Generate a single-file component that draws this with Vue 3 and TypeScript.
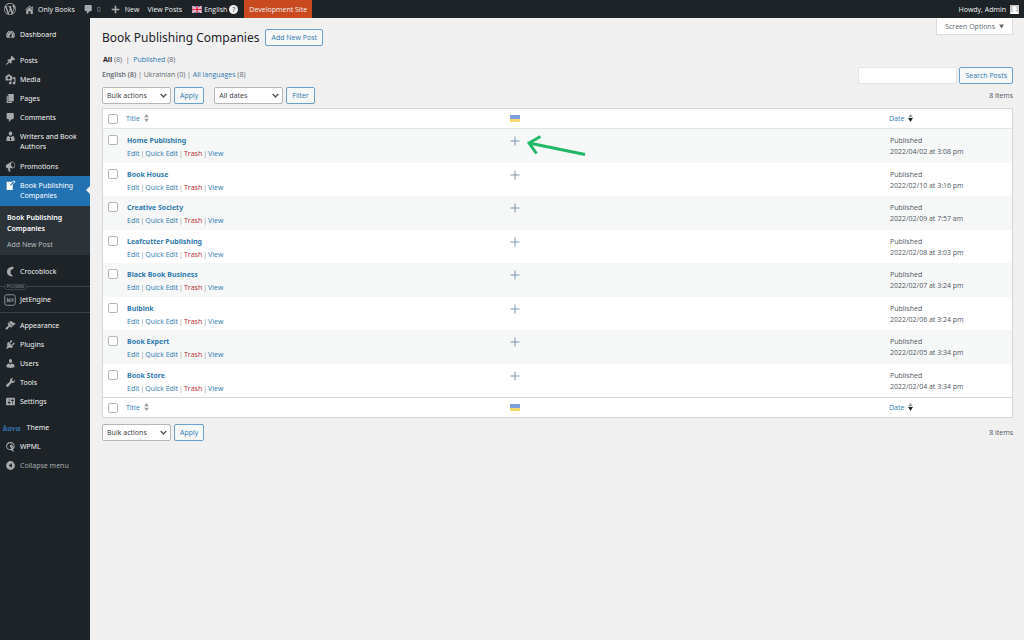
<script setup lang="ts">
import { ref } from 'vue'

interface MenuEntry {
  label: string
  icon: string
  wide?: boolean
}
interface Post {
  title: string
  date: string
}

const icons: Record<string, string> = {
  dashboard:
    'M3.76 16h12.48A7.998 7.998 0 0 0 10 3a7.998 7.998 0 0 0-6.24 13zM10 4c.55 0 1 .45 1 1s-.45 1-1 1-1-.45-1-1 .45-1 1-1zM6 6c.55 0 1 .45 1 1s-.45 1-1 1-1-.45-1-1 .45-1 1-1zm8 0c.55 0 1 .45 1 1s-.45 1-1 1-1-.45-1-1 .45-1 1-1zm-5.37 5.55L12 7v6c0 1.1-.9 2-2 2s-2-.9-2-2c0-.57.24-1.08.63-1.45zM4 10c.55 0 1 .45 1 1s-.45 1-1 1-1-.45-1-1 .45-1 1-1zm12 0c.55 0 1 .45 1 1s-.45 1-1 1-1-.45-1-1 .45-1 1-1z',
  post: 'M10.44 3.02l1.82-1.82 6.36 6.35-1.83 1.82c-1.05-.68-2.48-.57-3.41.36l-.75.75c-.92.93-1.04 2.35-.35 3.41l-1.83 1.82-2.41-2.41-2.8 2.79c-.42.42-3.38 2.71-3.8 2.29s1.86-3.39 2.28-3.81l2.79-2.79L4.1 9.36l1.83-1.82c1.05.69 2.48.57 3.4-.36l.75-.75c.93-.92 1.05-2.35.36-3.41z',
  media:
    'M13 11V4c0-.55-.45-1-1-1h-1.67L9 1H5L3.67 3H2c-.55 0-1 .45-1 1v7c0 .55.45 1 1 1h10c.55 0 1-.45 1-1zM7 4.5c1.38 0 2.5 1.12 2.5 2.5S8.38 9.5 7 9.5 4.5 8.38 4.5 7 5.62 4.5 7 4.5zM14 6h5v10.5c0 1.38-1.12 2.5-2.5 2.5S14 17.88 14 16.5s1.12-2.5 2.5-2.5c.17 0 .34.02.5.05V9h-3V6zm-4 8.05V13h2v3.5c0 1.38-1.12 2.5-2.5 2.5S7 17.88 7 16.5 8.12 14 9.5 14c.17 0 .34.02.5.05z',
  page: 'M6 15V2h10v13H6zm-1 1h8v2H3V5h2v11z',
  comment:
    'M5 2h9c1.1 0 2 .9 2 2v7c0 1.1-.9 2-2 2h-2l-5 5v-5H5c-1.1 0-2-.9-2-2V4c0-1.1.9-2 2-2z',
  author:
    'M10 1c2 0 3.2 1.5 3.2 3.4S12 8.2 10 8.2 6.800 6.300 6.800 4.400 8 1 10 1zM6.500 9.200L10 12l3.500-2.800c2.500.5 3.800 2 3.800 4.300V18H2.700v-4.500c0-2.300 1.300-3.800 3.800-4.300zM9.300 12.500L8.500 16l1.500 1.300 1.500-1.300-.8-3.500z',
  megaphone:
    'M18.15 5.94c.46 1.62.38 3.22-.02 4.48-.42 1.28-1.26 2.18-2.3 2.48-.16.06-.26.06-.4.06-.06.02-.12.02-.18.02-.06.02-.14.02-.22.02h-6.8l2.22 5.5c.02.14-.06.26-.14.34-.08.1-.24.16-.34.16H6.95c-.1 0-.26-.06-.34-.16-.08-.08-.16-.2-.14-.34l-1-5.5H4.25l-.02-.02c-.5.06-1.08-.18-1.54-.62s-.88-1.08-1.06-1.88c-.24-.8-.2-1.56-.02-2.2.18-.62.58-1.08 1.06-1.3l.02-.02 9-5.4c.1-.06.18-.1.24-.16.06-.04.14-.08.24-.12.16-.08.28-.12.5-.18 1.04-.3 2.24.1 3.22.98s1.84 2.24 2.26 3.86zm-2.58 5.98h-.02c.4-.1.74-.34 1.04-.7.58-.7.86-1.76.86-3.04 0-.64-.1-1.3-.28-1.98-.34-1.36-1.02-2.5-1.78-3.24s-1.68-1.1-2.46-.88c-.82.22-1.4.96-1.7 2-.32 1.04-.28 2.36.06 3.72.38 1.36 1 2.5 1.8 3.24.78.74 1.62 1.1 2.48.88z',
  write:
    'M16.89 1.2l1.41 1.41c.39.39.39 1.02 0 1.41L14 8.33V18H3V3h10.67l1.8-1.8c.4-.39 1.03-.4 1.42 0zm-5.66 8.48l5.37-5.36-1.42-1.42-5.36 5.37-.71 2.12z',
  croco:
    'M14.500 1.500C8 1.500 3.500 5.500 3.500 10.500S8 19 13 19c1 0 1.500-1.500.5-2.200-2.300-1.300-3.500-3.500-3.500-6s1.300-4.800 4.500-5.300c1.500-.5 1.500-4 0-4z',
  appearance:
    'M14.48 11.06L7.41 3.99l1.5-1.5c.5-.56 2.3-.47 3.51.32 1.21.8 1.43 1.28 2.91 2.1 1.18.64 2.45 1.26 4.45.85zm-.71.71L6.7 4.7 4.93 6.47c-.39.39-.39 1.02 0 1.41l1.06 1.06c.39.39.39 1.03 0 1.42-.6.6-1.43 1.11-2.21 1.69-.35.26-.7.53-1.01.84C1.43 14.23.4 16.08 1.4 17.07c.99 1 2.84-.03 4.18-1.36.31-.31.58-.66.85-1.02.57-.78 1.08-1.61 1.69-2.21.39-.39 1.02-.39 1.41 0l1.06 1.06c.39.39 1.02.39 1.41 0z',
  plugins:
    'M13.11 4.36L9.87 7.6 8 5.73l3.24-3.24c.35-.34 1.05-.2 1.56.32.52.51.66 1.21.31 1.55zm-8 1.77l.91-1.12 9.01 9.01-1.19.84c-.71.71-2.63 1.16-3.82 1.16H6.14L4.9 17.26c-.59.59-1.54.59-2.12 0-.59-.58-.59-1.53 0-2.12l1.24-1.24v-3.88c0-1.13.4-3.19 1.09-3.89zm7.26 3.97l3.24-3.24c.34-.35 1.04-.21 1.55.31.52.51.66 1.21.31 1.55l-3.24 3.25z',
  users:
    'M10 9.25c-2.27 0-2.73-3.44-2.73-3.44C7 4.02 7.82 2 9.97 2c2.16 0 2.98 2.02 2.71 3.81 0 0-.41 3.44-2.68 3.44zm0 2.57L12.72 10c2.39 0 4.52 2.33 4.52 4.53v2.49s-3.65 1.13-7.24 1.13c-3.65 0-7.24-1.13-7.24-1.13v-2.49c0-2.25 1.94-4.48 4.47-4.48z',
  tools:
    'M16.68 9.77c-1.34 1.34-3.3 1.67-4.95.99l-5.41 6.52c-.99.99-2.59.99-3.58 0s-.99-2.59 0-3.57l6.52-5.42c-.68-1.65-.35-3.61.99-4.95 1.28-1.28 3.12-1.62 4.72-1.06l-2.89 2.89 2.82 2.82 2.86-2.87c.53 1.58.18 3.39-1.08 4.65z',
  settings:
    'M18 16V4c0-.55-.45-1-1-1H3c-.55 0-1 .45-1 1v12c0 .55.45 1 1 1h14c.55 0 1-.45 1-1zM8 11h1c.55 0 1 .45 1 1s-.45 1-1 1H8v1.5c0 .28-.22.5-.5.5s-.5-.22-.5-.5V13H6c-.55 0-1-.45-1-1s.45-1 1-1h1V5.5c0-.28.22-.5.5-.5s.5.22.5.5V11zm5-2h-1c-.55 0-1-.45-1-1s.45-1 1-1h1V5.5c0-.28.22-.5.5-.5s.5.22.5.5V7h1c.55 0 1 .45 1 1s-.45 1-1 1h-1v5.5c0 .28-.22.5-.5.5s-.5-.22-.5-.5V9z',
  wpml: 'M9.500 2C14 2 17.500 5.300 17.500 9.700c0 3-1.500 5-3.500 6.300l2.500 2.500-1.300 1.200-5-3.200c-4.500 0-8.200-2.800-8.200-7C2 5.300 5 2 9.500 2zM9.500 4C6 4 3.800 6.500 3.800 9.500S6 14.700 9 14.700c2 0 2.700-.9 2.300-1.900-.5-1-2.300-1.500-2.300-3.300 0-1.600 1.200-2.500 2.700-2.500s2.300 1 2.300 2.300c0 1-.4 1.800-.4 2.700 1.200-.6 2.100-1.400 2.100-3C15.700 6 13 4 9.500 4z',
  collapse:
    'M10 2a8 8 0 1 0 0 16a8 8 0 1 0 0-16zM12.500 6v8L6.500 10z',
  home: 'M16 8.500l1.530 1.530-1.060 1.060L10 4.600l-6.470 6.490-1.060-1.060L10 2.500l4 4v-2h2v4zm-6-2.460l6 5.990V18h-4v-5H8v5H4v-5.970z',
  plus: 'M17 8.500v3h-5.500V17h-3v-5.500H3v-3h5.500V3h3v5.500z',
  wordpress:
    'M20 10c0-5.51-4.49-10-10-10C4.48 0 0 4.49 0 10c0 5.52 4.48 10 10 10 5.51 0 10-4.48 10-10zM7.78 15.37L4.37 6.22c.55-.02 1.17-.08 1.17-.08.5-.06.44-1.13-.06-1.11 0 0-1.45.11-2.37.11-.18 0-.37 0-.58-.01C4.12 2.69 6.87 1.11 10 1.11c2.33 0 4.45.87 6.05 2.34-.68-.11-1.65.39-1.65 1.58 0 .74.45 1.36.9 2.1.35.61.55 1.36.55 2.46 0 1.49-1.4 5-1.4 5l-3.03-8.37c.54-.02.82-.17.82-.17.5-.05.44-1.25-.06-1.22 0 0-1.44.12-2.38.12-.87 0-2.33-.12-2.33-.12-.5-.03-.56 1.2-.06 1.22l.92.08 1.26 3.41zM17.41 10c.24-.64.74-1.87.43-4.25.7 1.29 1.05 2.71 1.05 4.25 0 3.29-1.73 6.24-4.4 7.78.97-2.59 1.94-5.2 2.92-7.78zM6.1 18.09C3.12 16.65 1.11 13.53 1.11 10c0-1.3.23-2.48.72-3.59C3.25 10.3 4.67 14.2 6.1 18.09zm4.03-6.63l2.58 6.98c-.86.29-1.76.45-2.71.45-.79 0-1.57-.11-2.29-.33.81-2.38 1.62-4.74 2.42-7.1z',
}

const content: MenuEntry[] = [
  { label: 'Posts', icon: 'post' },
  { label: 'Media', icon: 'media' },
  { label: 'Pages', icon: 'page' },
  { label: 'Comments', icon: 'comment' },
  { label: 'Writers and Book Authors', icon: 'author', wide: true },
  { label: 'Promotions', icon: 'megaphone' },
]
const system: MenuEntry[] = [
  { label: 'Appearance', icon: 'appearance' },
  { label: 'Plugins', icon: 'plugins' },
  { label: 'Users', icon: 'users' },
  { label: 'Tools', icon: 'tools' },
  { label: 'Settings', icon: 'settings' },
]
const posts: Post[] = [
  { title: 'Home Publishing', date: '2022/04/02 at 3:08 pm' },
  { title: 'Book House', date: '2022/02/10 at 3:16 pm' },
  { title: 'Creative Society', date: '2022/02/09 at 7:57 am' },
  { title: 'Leafcutter Publishing', date: '2022/02/08 at 3:03 pm' },
  { title: 'Black Book Business', date: '2022/02/07 at 3:24 pm' },
  { title: 'Bulbink', date: '2022/02/06 at 3:24 pm' },
  { title: 'Book Expert', date: '2022/02/05 at 3:34 pm' },
  { title: 'Book Store', date: '2022/02/04 at 3:34 pm' },
]

const selected = ref<string[]>([])
const search = ref('')

function toggleAll(event: Event) {
  const on = (event.target as HTMLInputElement).checked
  selected.value = on ? posts.map((p) => p.title) : []
}
</script>

<template>
  <div class="admin">
    <header class="bar">
      <a href="#" class="bar-item logo" aria-label="About WordPress">
        <svg class="ico big" viewBox="0 0 20 20"><path :d="icons.wordpress" /></svg>
      </a>
      <a href="#" class="bar-item site"><svg class="ico" viewBox="0 0 20 20"><path :d="icons.home" /></svg>Only Books</a>
      <a href="#" class="bar-item comments"><svg class="ico" viewBox="0 0 20 20"><path :d="icons.comment" /></svg><span class="dim">0</span></a>
      <a href="#" class="bar-item new"><svg class="ico" viewBox="0 0 20 20"><path :d="icons.plus" /></svg>New</a>
      <a href="#" class="bar-item view">View Posts</a>
      <a href="#" class="bar-item lang">
        <svg class="flag-uk" viewBox="0 0 20 14">
          <rect width="20" height="14" fill="#4a58a6" />
          <path d="M0 0L20 14M20 0L0 14" stroke="#fff" stroke-width="3" />
          <path d="M0 0L20 14M20 0L0 14" stroke="#d8374a" stroke-width="1" />
          <path d="M10 0V14M0 7H20" stroke="#fff" stroke-width="5" />
          <path d="M10 0V14M0 7H20" stroke="#d8283e" stroke-width="3" />
        </svg>English<span class="help">?</span>
      </a>
      <a href="#" class="bar-item dev">Development Site</a>
      <a href="#" class="bar-item me">Howdy, Admin
        <svg class="avatar" viewBox="0 0 20 20">
          <rect width="20" height="20" fill="#c8c8c8" />
          <path d="M10 2.500c3 0 4.500 2 4.500 4.700 0 2.300-1 4.300-2.300 5.100v1.400l6.300 2.800V20h-17v-3.500l6.300-2.800v-1.400C6.500 11.500 5.500 9.500 5.500 7.200 5.500 4.500 7 2.500 10 2.500z" fill="#fff" />
        </svg>
      </a>
    </header>

    <div class="body">
      <nav class="side">
        <div class="group">
          <a href="#" class="item"><svg class="ico" viewBox="0 0 20 20"><path :d="icons.dashboard" fill-rule="evenodd" /></svg><span>Dashboard</span></a>
        </div>
        <div class="group">
          <a v-for="m in content" :key="m.label" href="#" class="item" :class="{ wide: m.wide }">
            <svg class="ico" viewBox="0 0 20 20"><path :d="icons[m.icon]" fill-rule="evenodd" /></svg><span>{{ m.label }}</span>
          </a>
          <a href="#" class="item wide current"><svg class="ico" viewBox="0 0 20 20"><path :d="icons.write" fill-rule="evenodd" /></svg><span>Book Publishing Companies</span></a>
          <div class="sub">
            <a href="#" class="on">Book Publishing Companies</a>
            <a href="#">Add New Post</a>
          </div>
        </div>
        <div class="group before-rule">
          <a href="#" class="item"><svg class="ico" viewBox="0 0 20 20"><path :d="icons.croco" /></svg><span>Crocoblock</span></a>
        </div>
        <div class="group ruled jet-group">
          <span class="tag">PLUGINS</span>
          <a href="#" class="item jet">
            <svg class="jet-ico" viewBox="0 0 24 24"><rect x="1.500" y="1.500" width="21" height="21" rx="4" fill="none" stroke="#8b9096" stroke-width="2" /><path d="M7 8v6c0 2-2.500 2-2.500 1M13.500 10h-4v5h4M9.500 12.500H13M16 8v7M19.500 10L16.500 12.500L19.500 15" fill="none" stroke="#a7aaad" stroke-width="1.500" /></svg>
            <span>JetEngine</span>
          </a>
        </div>
        <div class="group ruled">
          <a v-for="m in system" :key="m.label" href="#" class="item">
            <svg class="ico" viewBox="0 0 20 20"><path :d="icons[m.icon]" fill-rule="evenodd" /></svg><span>{{ m.label }}</span>
          </a>
        </div>
        <div class="group">
          <a href="#" class="item theme"><span class="kava">kava</span><span>Theme</span></a>
          <a href="#" class="item"><svg class="ico" viewBox="0 0 20 20"><path :d="icons.wpml" fill-rule="evenodd" /></svg><span>WPML</span></a>
          <button type="button" class="item collapse"><svg class="ico" viewBox="0 0 20 20"><path :d="icons.collapse" fill-rule="evenodd" /></svg><span>Collapse menu</span></button>
        </div>
      </nav>

      <main class="main">
        <div class="top">
          <div class="heading">
            <h1>Book Publishing Companies</h1>
            <a href="#" class="btn">Add New Post</a>
          </div>
          <button type="button" class="screen">Screen Options <svg class="tri" viewBox="0 0 10 10"><path d="M0 1H10L5 9z" /></svg></button>
        </div>

        <div class="filters">
          <div>
            <p class="views first"><a href="#" class="now">All</a> (8) &nbsp;|&nbsp; <a href="#">Published</a> (8)</p>
            <p class="views"><strong>English (8)</strong> | Ukrainian (0) | <a href="#">All languages</a> (8)</p>
          </div>
          <form class="search" @submit.prevent>
            <input v-model="search" type="search" aria-label="Search Posts" />
            <button type="submit" class="btn">Search Posts</button>
          </form>
        </div>

        <div class="tools">
          <span class="select"><select aria-label="Bulk actions"><option>Bulk actions</option></select><svg viewBox="0 0 10 10"><path d="M1 3L5 7L9 3" /></svg></span>
          <button type="button" class="btn">Apply</button>
          <span class="select dates"><select aria-label="Filter by date"><option>All dates</option></select><svg viewBox="0 0 10 10"><path d="M1 3L5 7L9 3" /></svg></span>
          <button type="button" class="btn">Filter</button>
          <span class="count">8 items</span>
        </div>

        <div class="sheet">
          <table>
            <thead>
              <tr>
                <td class="c-check"><input type="checkbox" aria-label="Select all" @change="toggleAll" /></td>
                <th class="c-title"><a href="#">Title<svg class="sort" viewBox="0 0 6 10"><path d="M0 4L3 0L6 4zM0 6L3 10L6 6z" /></svg></a></th>
                <th class="c-lang"><svg class="flag" viewBox="0 0 10 7" role="img" aria-label="Ukrainian"><rect width="10" height="4" fill="#7d9edb" /><rect y="4" width="10" height="3" fill="#f5d96a" /></svg></th>
                <th class="c-date"><a href="#">Date<svg class="sort" viewBox="0 0 6 10"><path d="M0 4L3 0L6 4z" /><path class="dark" d="M0 5L3 10L6 5z" /></svg></a></th>
              </tr>
            </thead>
            <tbody>
              <tr v-for="(p, i) in posts" :key="p.title">
                <td class="c-check"><input v-model="selected" type="checkbox" :value="p.title" :aria-label="'Select ' + p.title" /></td>
                <td class="c-title">
                  <a href="#" class="name">{{ p.title }}</a>
                  <div class="acts"><a href="#">Edit</a><span>|</span><a href="#">Quick Edit</a><span>|</span><a href="#" class="trash">Trash</a><span>|</span><a href="#">View</a></div>
                </td>
                <td class="c-lang">
                  <a href="#" class="add" :aria-label="'Add translation of ' + p.title"><svg viewBox="0 0 10 10"><path d="M5 0.500V9.500M0.500 5H9.500" /></svg></a>
                  <svg v-if="i === 0" class="arrow" viewBox="0 0 60 22"><path d="M2 8L58 19.500M13.500 1.500L2 8L9.500 18.500" /></svg>
                </td>
                <td class="c-date">Published<br />{{ p.date }}</td>
              </tr>
            </tbody>
            <tfoot>
              <tr>
                <td class="c-check"><input type="checkbox" aria-label="Select all" @change="toggleAll" /></td>
                <th class="c-title"><a href="#">Title<svg class="sort" viewBox="0 0 6 10"><path d="M0 4L3 0L6 4zM0 6L3 10L6 6z" /></svg></a></th>
                <th class="c-lang"><svg class="flag" viewBox="0 0 10 7" role="img" aria-label="Ukrainian"><rect width="10" height="4" fill="#7d9edb" /><rect y="4" width="10" height="3" fill="#f5d96a" /></svg></th>
                <th class="c-date"><a href="#">Date<svg class="sort" viewBox="0 0 6 10"><path d="M0 4L3 0L6 4z" /><path class="dark" d="M0 5L3 10L6 5z" /></svg></a></th>
              </tr>
            </tfoot>
          </table>
        </div>

        <div class="tools bottom">
          <span class="select"><select aria-label="Bulk actions"><option>Bulk actions</option></select><svg viewBox="0 0 10 10"><path d="M1 3L5 7L9 3" /></svg></span>
          <button type="button" class="btn">Apply</button>
          <span class="count">8 items</span>
        </div>
      </main>
    </div>
  </div>
</template>

<style>
body {
  margin: 0;
  background: #f0f0f1;
}
</style>

<style scoped>
.admin {
  min-height: 100vh;
  display: flex;
  flex-direction: column;
  font-family: "Open Sans", "Noto Sans", sans-serif;
  font-size: 7px;
  line-height: 11px;
  color: #50575e;
}
* {
  box-sizing: border-box;
}
a {
  color: #2f7aad;
  text-decoration: none;
}
button,
input,
select {
  font: inherit;
  margin: 0;
}
.ico {
  width: 11px;
  height: 11px;
  flex: none;
  fill: #a7aaad;
}
.bar {
  height: 18px;
  flex: none;
  display: flex;
  align-items: stretch;
  background: #1d2327;
}
.bar-item {
  display: flex;
  align-items: center;
  color: #f0f0f1;
  white-space: nowrap;
}
.big {
  width: 12px;
  height: 12px;
}
.logo {
  padding: 0 4px;
}
.site {
  gap: 3px;
  padding: 0 4px;
}
.comments {
  gap: 3px;
  padding: 0 5px 0 4px;
}
.new {
  gap: 4px;
  padding: 0 4px;
}
.view {
  padding: 0 4px;
}
.lang {
  gap: 2px;
  padding: 0 6px;
}
.dim {
  color: #8b9096;
}
.flag-uk {
  width: 10px;
  height: 7px;
}
.help {
  width: 9px;
  height: 9px;
  border-radius: 50%;
  background: #f0f0f1;
  color: #787c82;
  font-weight: 700;
  line-height: 9px;
  text-align: center;
}
.dev {
  padding: 0 5px;
  background: #ca4a1f;
}
.me {
  margin-left: auto;
  gap: 4px;
  padding-right: 5px;
}
.avatar {
  width: 9px;
  height: 9px;
}
.body {
  flex: 1;
  display: flex;
}
.side {
  width: 90px;
  flex: none;
  padding-top: 7px;
  background: #1d2327;
  font-family: "Noto Sans", "Open Sans", sans-serif;
}
.group {
  position: relative;
  margin-bottom: 7px;
}
.item {
  position: relative;
  display: flex;
  align-items: center;
  gap: 4px;
  width: 100%;
  height: 19px;
  padding: 0 5px;
  border: 0;
  background: none;
  color: #f0f0f1;
  text-align: left;
}
.wide {
  height: 30px;
  line-height: 10px;
}
.wide .ico {
  align-self: flex-start;
  margin-top: 4px;
}
.current {
  background: #2271b1;
  color: #fff;
}
.current .ico {
  fill: #fff;
}
.current::after {
  content: "";
  position: absolute;
  right: 0;
  top: 10px;
  border: 4px solid transparent;
  border-right-color: #f0f0f1;
  border-left: 0;
}
.sub {
  display: flex;
  flex-direction: column;
  gap: 5px;
  padding: 6px 7px 5px;
  background: #2c3338;
}
.sub a {
  color: #b4b9be;
}
.sub .on {
  color: #fff;
  font-weight: 600;
}
.before-rule {
  margin-bottom: 5px;
}
.ruled {
  border-top: 1px solid #3c434a;
  padding-top: 3px;
}
.jet-group {
  margin-bottom: 3px;
}
.tag {
  position: absolute;
  left: 4px;
  top: -3px;
  padding: 0 2px;
  border: 1px solid #3c434a;
  border-radius: 3px;
  background: #1d2327;
  color: #8b9096;
  font-size: 4px;
  line-height: 4px;
}
.jet {
  padding-left: 4px;
}
.jet-ico {
  width: 12px;
  height: 12px;
}
.theme {
  gap: 6px;
  padding-left: 3px;
}
.kava {
  color: #3573b5;
  font: italic 700 9px "Liberation Serif", serif;
}
.collapse {
  color: #a7aaad;
}
.main {
  flex: 1;
  min-width: 0;
  padding: 0 11px 0 12px;
}
.top,
.filters {
  display: flex;
  justify-content: space-between;
  align-items: flex-start;
}
.heading {
  display: flex;
  align-items: center;
  gap: 6px;
  padding-top: 11px;
}
h1 {
  margin: 0;
  font-family: "Noto Sans", "Open Sans", sans-serif;
  font-size: 12px;
  line-height: 17px;
  font-weight: 400;
  color: #1d2327;
}
.btn {
  height: 17px;
  padding: 0 5px;
  border: 1px solid #6ba0c9;
  border-radius: 2px;
  background: #f6f7f7;
  color: #2f7aad;
  line-height: 15px;
  white-space: nowrap;
}
.screen {
  display: flex;
  align-items: center;
  gap: 4px;
  height: 17px;
  padding: 0 8px;
  border: 1px solid #dcdcde;
  border-top: 0;
  background: #fff;
  color: #646970;
}
.tri {
  width: 5px;
  height: 5px;
  fill: #646970;
}
.filters {
  padding-top: 8px;
}
.views {
  margin: 0 0 3px;
  line-height: 12px;
  color: #646970;
}
.first {
  padding-left: 1px;
}
.views strong {
  font-weight: 600;
}
.now {
  color: #1d2327;
  font-weight: 700;
}
.search {
  display: flex;
  gap: 2px;
  padding-top: 13px;
}
.search input {
  width: 99px;
  height: 17px;
  border: 1px solid #e4e4e6;
  border-radius: 2px;
  background: #fff;
}
.tools {
  display: flex;
  align-items: center;
  gap: 3px;
  padding-top: 3px;
}
.select {
  position: relative;
  width: 69px;
}
.select select {
  display: block;
  width: 100%;
  height: 17px;
  padding: 0 4px;
  border: 1px solid #b4b6b9;
  border-radius: 2px;
  background: #fff;
  color: #3c434a;
  font-family: "Noto Sans", "Open Sans", sans-serif;
  appearance: none;
}
.select svg {
  position: absolute;
  right: 4px;
  top: 5px;
  width: 7px;
  height: 7px;
  fill: none;
  stroke: #50575e;
  stroke-width: 2;
  pointer-events: none;
}
.dates {
  margin-left: 7px;
}
.count {
  margin-left: auto;
}
.sheet {
  margin-top: 4px;
  border: 1px solid #d5d6d9;
  background: #fff;
}
table {
  width: 100%;
  border-collapse: separate;
  border-spacing: 0;
  table-layout: fixed;
}
td,
th {
  padding: 0;
  text-align: left;
  font-weight: 400;
  vertical-align: middle;
}
thead tr,
tfoot tr {
  height: 20px;
}
thead td,
thead th {
  border-bottom: 1px solid #e4e5e7;
}
tfoot td,
tfoot th {
  border-top: 1px solid #d5d6d9;
}
tbody tr {
  height: 33px;
}
tbody tr:nth-child(odd) {
  height: 34px;
}
tbody tr:nth-child(odd) td {
  background: #f6f7f7;
}
tbody td {
  padding-top: 6px;
  vertical-align: top;
}
.c-check {
  width: 23px;
  padding-left: 5px;
}
.c-lang {
  width: 42%;
  position: relative;
  padding-left: 3px;
}
.c-date {
  width: 123px;
}
.c-check input {
  display: block;
  appearance: none;
  width: 10px;
  height: 10px;
  border: 1px solid #b4b6b9;
  border-radius: 2px;
  background: #fff;
}
.c-check input:checked {
  background: #2271b1;
}
tbody .c-title {
  padding-left: 1px;
}
tbody .c-date {
  padding-left: 1px;
}
.name {
  font-family: "Noto Sans", "Open Sans", sans-serif;
  font-weight: 700;
}
.acts {
  display: flex;
  gap: 1px;
  padding-top: 2px;
  color: #8b9096;
}
.acts .trash {
  color: #b32d2e;
}
.sort {
  width: 5px;
  height: 8px;
  margin-left: 4px;
  vertical-align: -1px;
  fill: #9a9da1;
}
.sort .dark {
  fill: #1d2327;
}
.flag {
  display: block;
  width: 10px;
  height: 7px;
}
.add svg {
  display: block;
  width: 10px;
  height: 10px;
  margin-top: 1px;
  fill: none;
  stroke: #7d97ad;
  stroke-width: 1;
}
.arrow {
  position: absolute;
  left: 20px;
  top: 6px;
  width: 60px;
  height: 22px;
  fill: none;
  stroke: #1fb866;
  stroke-width: 3;
}
.bottom {
  padding-top: 6px;
}
</style>
